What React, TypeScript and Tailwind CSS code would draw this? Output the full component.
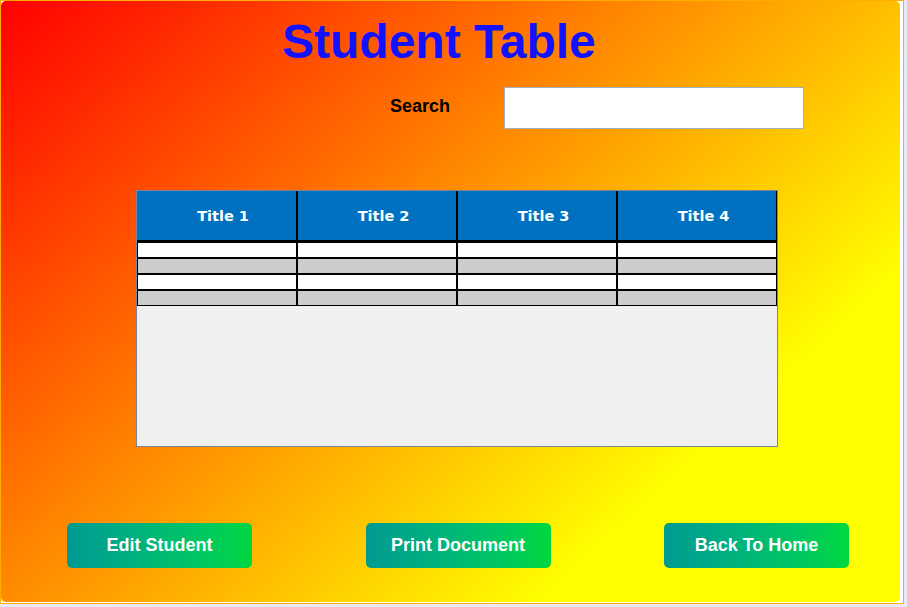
const titles = ['Title 1', 'Title 2', 'Title 3', 'Title 4'];
const rows = ['bg-white', 'bg-[#cccccc]', 'bg-white', 'bg-[#cccccc]'];
const buttons = ['Edit Student', 'Print Document', 'Back To Home'];

export default function App() {
  return (
    <div className="w-[907px] h-[607px] bg-[#e8e8f8] font-['Liberation_Sans',Arial,sans-serif]">
      <div className="w-[904px] h-[604px] border border-[#ffae00] bg-white">
        <div className="w-[899px] h-[601px] rounded-[5px] bg-[linear-gradient(137.6deg,#ff0000_0%,#ffff00_77%)] flex flex-col">
          <h1 className="pt-[17px] pl-[281px] text-[48px] leading-[48px] font-bold text-[#1212ff]">
            Student Table
          </h1>

          <div className="mt-[21px] flex items-start">
            <label className="mt-[10px] ml-[389px] text-[18px] leading-[18px] font-bold text-black">Search</label>
            <input
              type="text"
              className="ml-[54px] w-[300px] h-[42px] bg-white border border-[#a3aebf] outline-none px-2"
            />
          </div>

          <div className="mt-[61px] ml-[135px] w-[642px] h-[257px] border border-[#7a8696] bg-[#f0f0f0]">
            <div className="grid grid-cols-4 h-[51px] bg-[#0070c0] border-b-2 border-black">
              {titles.map((t, i) => (
                <div
                  key={t}
                  className={`flex items-center justify-center pl-[13px] pt-[2px] border-black border-r ${i > 0 ? 'border-l' : ''} text-white text-[14.5px] font-bold font-['DejaVu_Sans',sans-serif]`}
                >
                  {t}
                </div>
              ))}
            </div>
            {rows.map((bg, r) => (
              <div key={r} className="grid grid-cols-4 h-[16px] bg-[#808080]">
                {titles.map((t) => (
                  <div key={t} className={`${bg} border border-black`} />
                ))}
              </div>
            ))}
          </div>

          <div className="mt-[76px] ml-[66px] flex gap-[113.5px]">
            {buttons.map((b) => (
              <button
                key={b}
                className="w-[185px] h-[45px] rounded-[5px] bg-gradient-to-r from-[#009a92] to-[#00d83c] text-white text-[18px] font-bold"
              >
                {b}
              </button>
            ))}
          </div>
        </div>
      </div>
    </div>
  );
}
